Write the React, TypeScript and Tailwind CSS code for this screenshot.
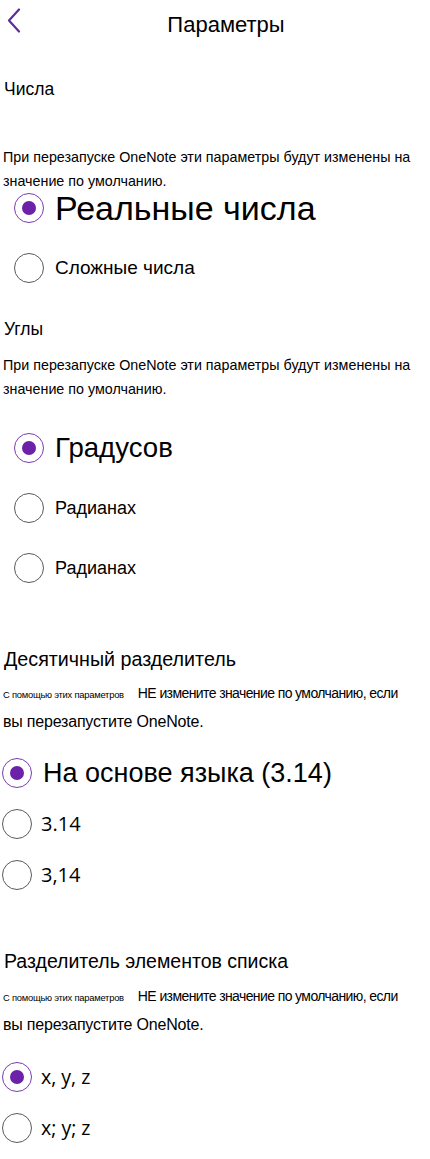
import React from "react";

type RadioProps = {
  label: string;
  checked?: boolean;
  textClass: string;
  rowClass: string;
};

function Radio({ label, checked, textClass, rowClass }: RadioProps) {
  return (
    <div className={`flex items-center h-[30px] ${rowClass}`}>
      <span
        className={`flex items-center justify-center w-[30px] h-[30px] rounded-full border shrink-0 ${
          checked ? "border-[#7a3db0]" : "border-[#5a5a5a]"
        }`}
      >
        {checked && <span className="w-[14px] h-[14px] rounded-full bg-[#6b21a8]" />}
      </span>
      <span className={`whitespace-nowrap text-black ${textClass}`}>{label}</span>
    </div>
  );
}

function Heading({ children, className }: { children: React.ReactNode; className: string }) {
  return <div className={`h-6 flex items-center pl-[4px] text-black ${className}`}>{children}</div>;
}

function Notice({ className }: { className: string }) {
  return (
    <p className={`pl-[3px] leading-[27px] text-black ${className}`}>
      <span className="text-[9.4px] tracking-tight">С помощью этих параметров</span>
      <span className="ml-[14px] text-[14px] tracking-[-0.6px]">НЕ измените значение по умолчанию, если</span>
      <br />
      <span className="text-[16px] tracking-[-0.2px]">вы перезапустите OneNote.</span>
    </p>
  );
}

export default function App() {
  return (
    <div className="w-[430px] h-[1159px] bg-white overflow-hidden font-['Liberation_Sans',Arial,sans-serif]">
      <header className="relative h-12 flex items-center justify-center">
        <svg className="absolute left-[6px] top-[8px]" width="16" height="25" viewBox="0 0 16 25" fill="none">
          <path d="M13 1.5 L3 12.5 L13 23.5" stroke="#5e2c9a" strokeWidth="2.2" strokeLinecap="round" strokeLinejoin="round" />
        </svg>
        <h1 className="ml-[22px] text-[22px] text-black">Параметры</h1>
      </header>

      <Heading className="mt-[29px] text-[17.5px]">Числа</Heading>
      <p className="mt-[44px] pl-[3px] text-[14.3px] leading-6 text-black">
        При перезапуске OneNote эти параметры будут изменены на
        <br />
        значение по умолчанию.
      </p>
      <Radio checked label="Реальные числа" rowClass="pl-[14px]" textClass="ml-[11px] text-[34px]" />
      <Radio label="Сложные числа" rowClass="mt-[30px] pl-[14px]" textClass="ml-[11px] text-[19px]" />

      <Heading className="mt-[34px] text-[17.5px]">Углы</Heading>
      <p className="mt-[12px] pl-[3px] text-[14.3px] leading-6 text-black">
        При перезапуске OneNote эти параметры будут изменены на
        <br />
        значение по умолчанию.
      </p>
      <Radio checked label="Градусов" rowClass="mt-[32px] pl-[14px]" textClass="ml-[11px] text-[27.6px]" />
      <Radio label="Радианах" rowClass="mt-[30px] pl-[14px]" textClass="ml-[11px] text-[18px]" />
      <Radio label="Радианах" rowClass="mt-[30px] pl-[14px]" textClass="ml-[11px] text-[18px]" />

      <Heading className="mt-[65px] text-[19.7px]">Десятичный разделитель</Heading>
      <Notice className="mt-[7px]" />
      <Radio checked label="На основе языка (3.14)" rowClass="mt-[23px] pl-[2px]" textClass="ml-[11px] text-[27px]" />
      <Radio label="3.14" rowClass="mt-[21px] pl-[2px]" textClass="ml-[9px] text-[20px] text-[#333] font-['Open_Sans',sans-serif]" />
      <Radio label="3,14" rowClass="mt-[21px] pl-[2px]" textClass="ml-[9px] text-[20px] text-[#333] font-['Open_Sans',sans-serif]" />

      <Heading className="mt-[60px] text-[19.5px]">Разделитель элементов списка</Heading>
      <Notice className="mt-[8px]" />
      <Radio checked label="x, y, z" rowClass="mt-[24px] pl-[2px]" textClass="ml-[9px] text-[19.5px] text-[#333] font-['Open_Sans',sans-serif]" />
      <Radio label="x; y; z" rowClass="mt-[21px] pl-[2px]" textClass="ml-[9px] text-[19.5px] text-[#333] font-['Open_Sans',sans-serif]" />
    </div>
  );
}
